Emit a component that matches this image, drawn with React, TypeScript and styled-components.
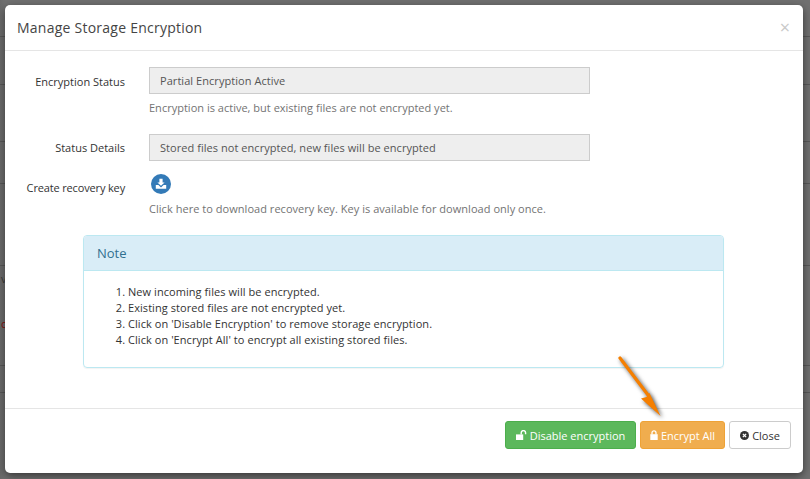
import styled, { createGlobalStyle } from "styled-components";

const GlobalStyle = createGlobalStyle`
  html, body {
    margin: 0;
    padding: 0;
    background: #6d6d6d;
    overflow: hidden;
  }
  body {
    font-family: "Open Sans", "Liberation Sans", sans-serif;
    font-size: 11px;
    color: #333;
  }
`;

const Page = styled.div`
  position: relative;
  width: 810px;
  height: 479px;
  overflow: hidden;
  background: linear-gradient(90deg, #6a6a6a 0, #707070 5px);
`;

const BackRow = styled.div<{ $h: number; $line?: boolean }>`
  height: ${(p) => p.$h}px;
  box-sizing: border-box;
  border-bottom: ${(p) => (p.$line ? "1px solid #585858" : "none")};
  position: relative;
`;

const BackMark = styled.span<{ $color: string }>`
  position: absolute;
  left: 1px;
  bottom: 2px;
  font-size: 11px;
  line-height: 14px;
  color: ${(p) => p.$color};
`;

const Modal = styled.div`
  position: absolute;
  left: 5px;
  top: 5px;
  width: 798px;
  height: 468px;
  box-sizing: border-box;
  display: flex;
  flex-direction: column;
  background: #fff;
  border-radius: 5px;
  box-shadow: 0 3px 9px rgba(0, 0, 0, 0.5);
`;

const Header = styled.div`
  height: 46px;
  box-sizing: border-box;
  flex: none;
  border-bottom: 1px solid #e5e5e5;
  padding: 14px 12px 0;
  display: flex;
  justify-content: space-between;
  align-items: flex-start;
`;

const Title = styled.h4`
  margin: 0;
  font-size: 14px;
  font-weight: 400;
  line-height: 18px;
  letter-spacing: 0.24px;
  color: #444;
`;

const CloseX = styled.span`
  font-size: 18px;
  line-height: 16px;
  font-weight: 400;
  color: #c9c9c9;
  margin: 0 1px 0 0;
`;

const Body = styled.div`
  flex: 1;
  box-sizing: border-box;
  padding: 16px 0 0;
  display: flex;
  flex-direction: column;
`;

const FormRow = styled.div<{ $h: number }>`
  height: ${(p) => p.$h}px;
  display: grid;
  grid-template-columns: 120px 441px;
  column-gap: 24px;
  align-items: start;
`;

const Label = styled.label<{ $pad: number; $tight?: boolean }>`
  text-align: right;
  font-size: 11px;
  line-height: 15px;
  padding-top: ${(p) => p.$pad}px;
  letter-spacing: ${(p) => (p.$tight ? "-0.15px" : "0")};
  color: #333;
`;

const ReadOnly = styled.div`
  height: 27px;
  box-sizing: border-box;
  border: 1px solid #ccc;
  background: #eee;
  padding: 0 10px;
  font-size: 11px;
  line-height: 25px;
  letter-spacing: 0.05px;
  color: #555;
`;

const Help = styled.p<{ $top: number; $spacing: number }>`
  margin: ${(p) => p.$top}px 0 0;
  font-size: 11px;
  line-height: 15px;
  letter-spacing: ${(p) => p.$spacing}px;
  color: #737373;
`;

const DownloadBadge = styled.a`
  display: flex;
  width: 20px;
  height: 20px;
  margin-left: 2px;
  border-radius: 50%;
  background: #337ab7;
  align-items: center;
  justify-content: center;
`;

const Panel = styled.div`
  width: 641px;
  height: 133px;
  margin: 0 0 0 78px;
  box-sizing: border-box;
  border: 1px solid #bce8f1;
  border-radius: 4px;
  box-shadow: 0 1px 1px rgba(0, 0, 0, 0.05);
`;

const PanelHead = styled.div`
  height: 35px;
  box-sizing: border-box;
  padding: 0 13px;
  background: #d9edf7;
  border-bottom: 1px solid #bce8f1;
  border-radius: 3px 3px 0 0;
  font-size: 13px;
  line-height: 35px;
  color: #31708f;
`;

const NoteList = styled.ol`
  margin: 13px 0 0;
  padding: 0 0 0 44px;
  font-size: 11px;
  line-height: 16px;
  letter-spacing: 0.06px;
  color: #333;
`;

const Footer = styled.div`
  height: 65px;
  box-sizing: border-box;
  flex: none;
  border-top: 1px solid #e5e5e5;
  padding: 12px 12px 0 0;
  display: flex;
  justify-content: flex-end;
  gap: 4px;
`;

const Button = styled.button<{ $bg: string; $border: string; $color: string; $w: number; $gap: number }>`
  width: ${(p) => p.$w}px;
  height: 28px;
  box-sizing: border-box;
  padding: 0;
  display: inline-flex;
  align-items: center;
  justify-content: center;
  gap: ${(p) => p.$gap}px;
  font-family: inherit;
  font-size: 11px;
  line-height: 15px;
  background: ${(p) => p.$bg};
  border: 1px solid ${(p) => p.$border};
  border-radius: 3px;
  color: ${(p) => p.$color};
`;

const Arrow = styled.svg`
  position: absolute;
  left: 610px;
  top: 350px;
  overflow: visible;
  filter: drop-shadow(2px 2px 2px rgba(0, 0, 0, 0.7));
`;

const notes = [
  "New incoming files will be encrypted.",
  "Existing stored files are not encrypted yet.",
  "Click on 'Disable Encryption' to remove storage encryption.",
  "Click on 'Encrypt All' to encrypt all existing stored files.",
];

export default function App() {
  return (
    <Page>
      <GlobalStyle />
      <BackRow $h={37} $line />
      <BackRow $h={48} $line />
      <BackRow $h={57} $line />
      <BackRow $h={42} $line />
      <BackRow $h={82} $line />
      <BackRow $h={22}>
        <BackMark $color="#3a3a3a">v</BackMark>
      </BackRow>
      <BackRow $h={45}>
        <BackMark $color="#8a0f0f">c</BackMark>
      </BackRow>
      <BackRow $h={33} $line />
      <BackRow $h={27} $line />

      <Modal>
        <Header>
          <Title>Manage Storage Encryption</Title>
          <CloseX>×</CloseX>
        </Header>
        <Body>
          <FormRow $h={67}>
            <Label $pad={7}>Encryption Status</Label>
            <div>
              <ReadOnly>Partial Encryption Active</ReadOnly>
              <Help $top={6} $spacing={0.01}>
                Encryption is active, but existing files are not encrypted yet.
              </Help>
            </div>
          </FormRow>
          <FormRow $h={40}>
            <Label $pad={6}>Status Details</Label>
            <ReadOnly>Stored files not encrypted, new files will be encrypted</ReadOnly>
          </FormRow>
          <FormRow $h={61}>
            <Label $pad={6} $tight>
              Create recovery key
            </Label>
            <div>
              <DownloadBadge>
                <svg width="12" height="12" viewBox="0 0 12 12" aria-hidden="true">
                  <path d="M4.4 0.8h3.2v3.6h2L6 7.8 2.4 4.4h2z" fill="#fff" />
                  <path d="M0.8 7h2.6L6 9.4 8.6 7h2.6v3.8H0.8z" fill="#fff" />
                </svg>
              </DownloadBadge>
              <Help $top={7} $spacing={0.04}>
                Click here to download recovery key. Key is available for download only once.
              </Help>
            </div>
          </FormRow>
          <Panel>
            <PanelHead>Note</PanelHead>
            <NoteList>
              {notes.map((n) => (
                <li key={n}>{n}</li>
              ))}
            </NoteList>
          </Panel>
        </Body>
        <Footer>
          <Button $bg="#5cb85c" $border="#4cae4c" $color="#fff" $w={131} $gap={2}>
            <svg width="12" height="10" viewBox="0 0 12 10" aria-hidden="true">
              <path d="M0 4.4h7.2V10H0z" fill="#fff" />
              <path d="M5.2 4.4V2.8a2.2 2.2 0 0 1 4.4 0v1.4" fill="none" stroke="#fff" strokeWidth="1.4" />
            </svg>
            Disable encryption
          </Button>
          <Button $bg="#f0ad4e" $border="#eea236" $color="#fff" $w={85} $gap={3}>
            <svg width="8" height="10" viewBox="0 0 8 10" aria-hidden="true">
              <path d="M0.3 4.2h7.4V10H0.3z" fill="#fff" />
              <path d="M2 4.4V2.8a2 2 0 0 1 4 0v1.6" fill="none" stroke="#fff" strokeWidth="1.3" />
            </svg>
            Encrypt All
          </Button>
          <Button $bg="#fff" $border="#ccc" $color="#333" $w={62} $gap={3}>
            <svg width="9" height="9" viewBox="0 0 10 10" aria-hidden="true">
              <circle cx="5" cy="5" r="5" fill="#333" />
              <path d="M3.2 3.2l3.6 3.6M6.8 3.2L3.2 6.8" stroke="#fff" strokeWidth="1.5" />
            </svg>
            Close
          </Button>
        </Footer>
      </Modal>

      <Arrow width="60" height="70" viewBox="0 0 60 70" aria-hidden="true">
        <path d="M10 8L38 45" stroke="#f57f00" strokeWidth="3.2" strokeLinecap="round" fill="none" />
        <path d="M50.5 66L31 48.5L36.5 47L39.5 43z" fill="#f57f00" />
      </Arrow>
    </Page>
  );
}
